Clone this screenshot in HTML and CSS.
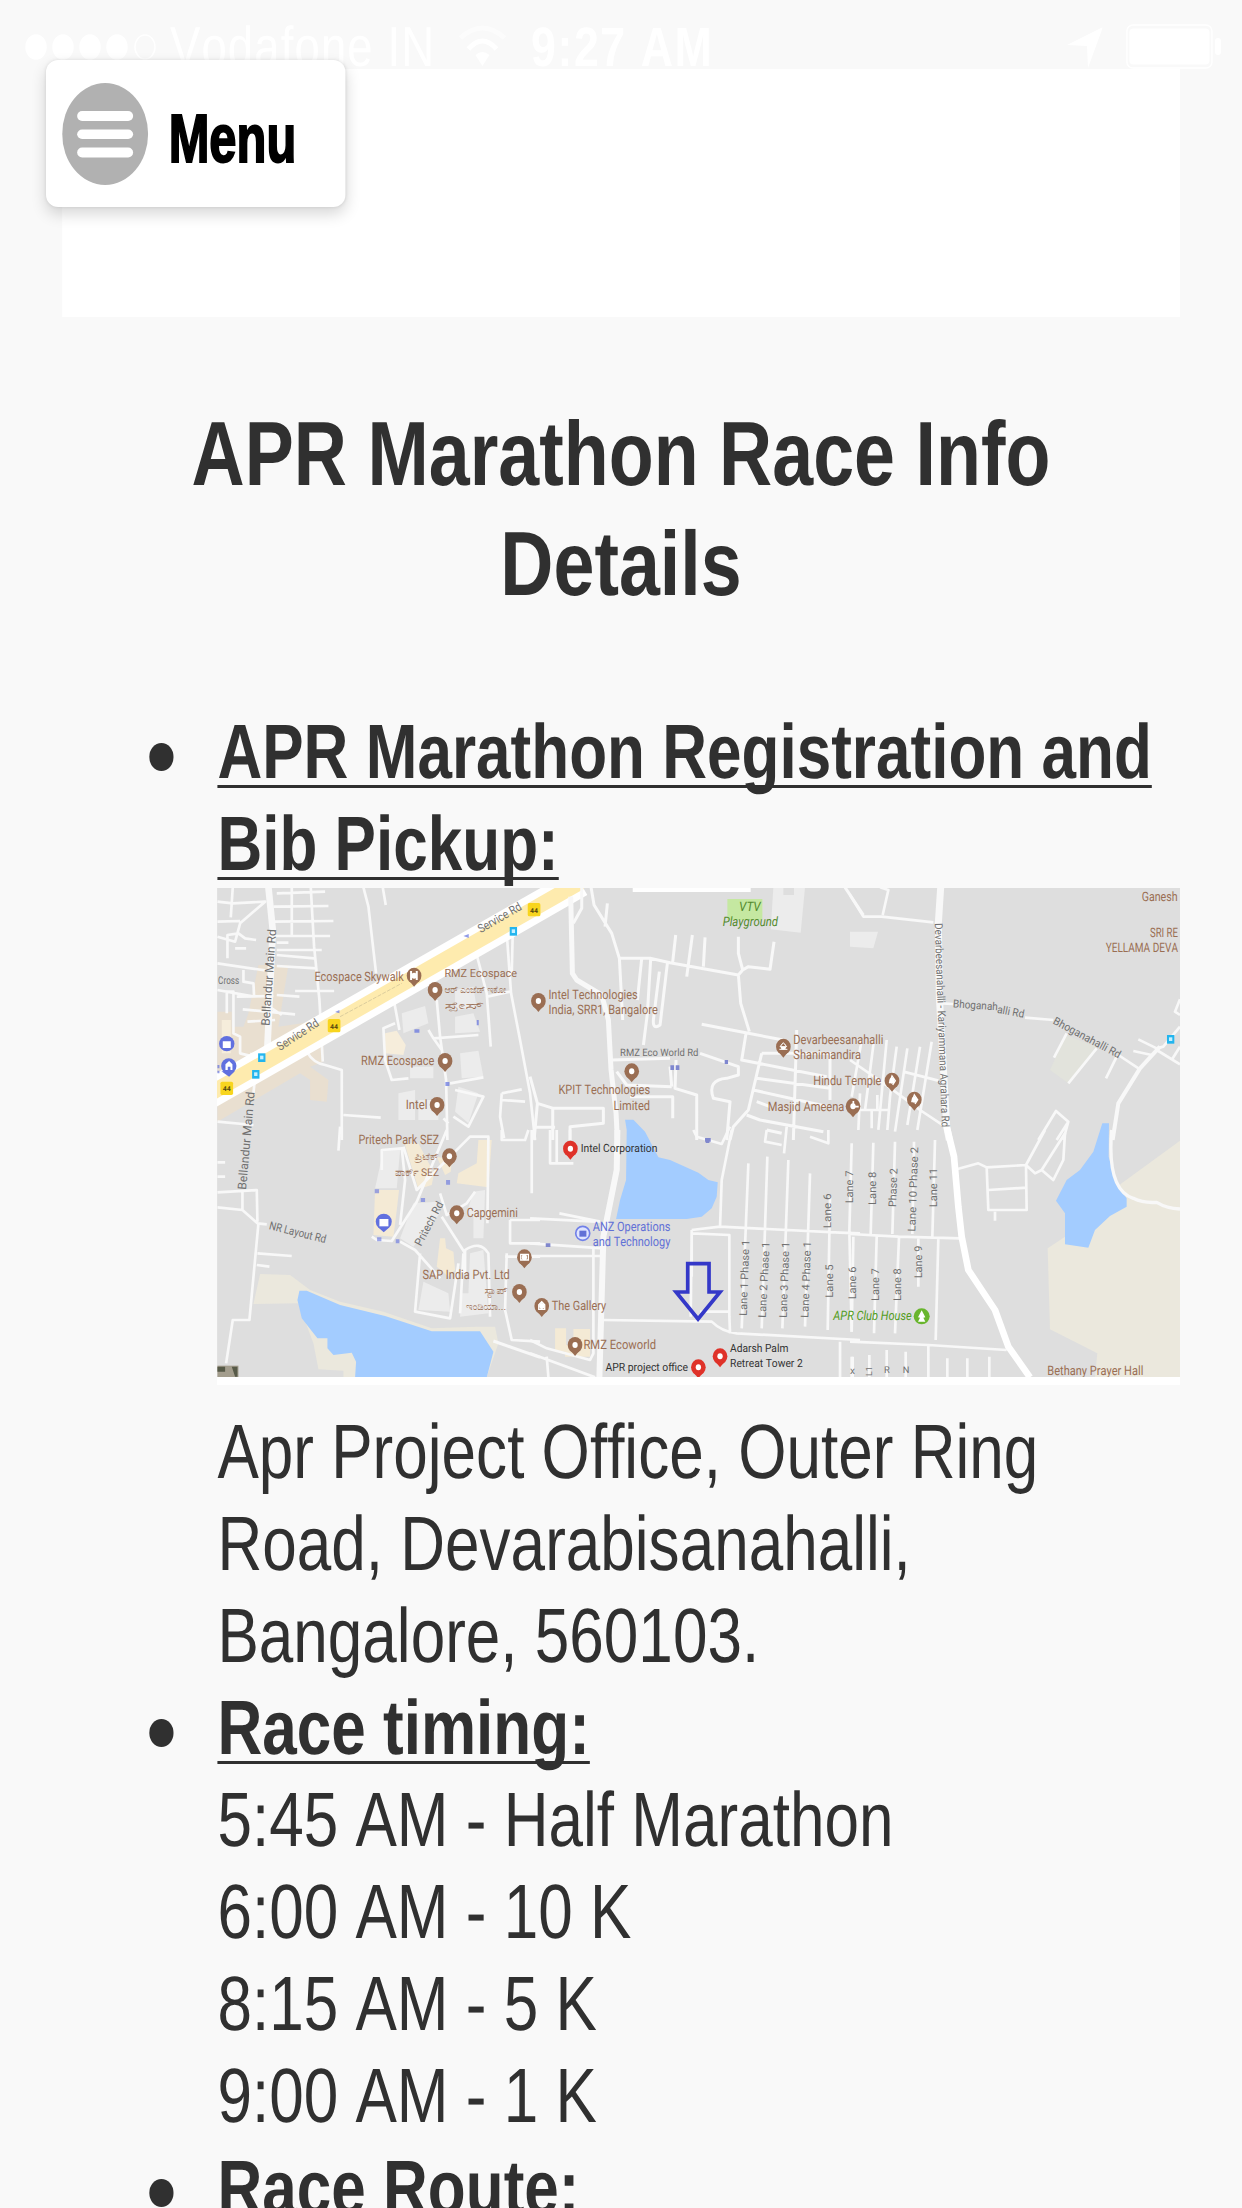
FILE: index.html
```html
<!DOCTYPE html>
<html lang="en">
<head>
<meta charset="utf-8">
<title>APR Marathon Race Info</title>
<link rel="stylesheet" href="styles.css">
<script src="map.js" defer></script>
</head>
<body>
<div class="screen">
  <header class="status">
    <svg class="signal" viewBox="0 0 132 26" preserveAspectRatio="none" fill="#fff" stroke="#fff" stroke-width="1.5"><ellipse cx="11" cy="13" rx="10" ry="12"/><ellipse cx="38" cy="13" rx="10" ry="12"/><ellipse cx="65" cy="13" rx="10" ry="12"/><ellipse cx="92" cy="13" rx="10" ry="12"/><ellipse cx="120" cy="13" rx="10" ry="12" fill="none"/></svg>
    <span class="carrier">Vodafone IN</span>
    <svg class="wifi" viewBox="0 0 48 41" preserveAspectRatio="none" fill="none" stroke="#fff" stroke-width="5"><path d="M2 13Q24 -7 46 13" opacity=".55"/><path d="M10 24Q24 8 38 24"/><path d="M24 41L17 30Q24 24 31 30Z" fill="#fff" stroke="none"/></svg>
    <span class="time">9:27 AM</span>
    <svg class="locate" viewBox="0 0 36 41" preserveAspectRatio="none"><path d="M36 0L21 41L20 19L0 18Z" fill="#fff"/></svg>
    <svg class="battery" viewBox="0 0 96 45" preserveAspectRatio="none" fill="#fff"><rect x="1" y="1" width="85" height="43" rx="6" fill="none" stroke="#fff" stroke-width="1.500"/><rect x="3.500" y="4.500" width="80" height="36" rx="4"/><rect x="89" y="14" width="6" height="17" rx="3"/></svg>
  </header>
  <button class="menu">
    <svg class="menu-icon" viewBox="0 0 86 102" preserveAspectRatio="none"><ellipse cx="43" cy="51" rx="43" ry="51" fill="#b1b1b1"/><g fill="#fff"><rect x="15" y="28" width="56" height="10" rx="5"/><rect x="15" y="46.500" width="56" height="9.500" rx="5"/><rect x="15" y="64.500" width="56" height="10" rx="5"/></g></svg>
    <span class="menu-label">Menu</span>
  </button>
  <main class="content">
    <div class="banner"></div>
    <h1>APR Marathon Race Info Details</h1>
    <ul class="info">
      <li>
        <strong>APR Marathon Registration and Bib Pickup:</strong>
        <svg class="map" viewBox="217 888 963 489" preserveAspectRatio="none">
          <defs>
            <g id="pin"><path d="M-14 16L0 33L14 16Z"/><ellipse rx="22" ry="24"/><ellipse rx="8" ry="9" fill="#fff"/></g>
            <g id="stop"><rect x="-11" y="-13" width="22" height="26" fill="#23b5ee"/><rect x="-5" y="-6" width="10" height="11" fill="#c7f0ff"/></g>
            <g id="badge"><rect x="-19" y="-21" width="38" height="40" rx="5" fill="#f8d51e"/><text x="-12" y="8" textLength="24" font-size="20" fill="#56480e" font-weight="bold">44</text></g>
          </defs>
          <rect x="217" y="888" width="963" height="489" fill="#dedede"/>
          <!-- land and water -->
          <g transform="translate(210 880) scale(.33333)">
            <path fill="#e9dfd0" d="M22 395H65V440H100L115 400L145 255H235L205 440L340 420V545L300 560L355 600L350 665L300 660V600L270 580L22 725Z"/>
            <path fill="#f6eddb" d="M35 420H62V520H35ZM525 460L560 452L587 495L580 525L525 520Z"/>
            <path fill="#ececec" d="M575 400L645 378L655 430L580 460ZM735 410L790 400L810 455L735 460ZM750 520L805 512L820 590L755 595ZM565 640L615 630V720H565ZM625 660H685V720H625ZM745 620L805 640L775 730L735 695ZM735 330L790 320L800 385L735 390ZM600 560H670V595H600Z"/>
          </g>
          <g transform="translate(530 880) scale(.33333)">
            <path fill="#ececec" d="M730 22H825L812 158L722 148ZM960 155H1044L1030 205L960 200Z"/><path fill="#dedede" d="M760 22H792V45H760Z"/>
            <path fill="#c5e8a1" d="M592 57H697V120H592Z"/>
            <path fill="#fff" d="M308 22H662V36H308Z"/>
          </g>
          <g transform="translate(850 880) scale(.33333)">
            <path fill="#e2e3dc" d="M648 465L738 500L655 610L600 570Z"/>
          </g>
          <g transform="translate(210 1130) scale(.33333)">
            <path fill="#ebe8dd" d="M150 432L240 435L300 480L390 515L520 545L665 595L800 590H855L865 640L830 742H400V722L325 718L310 640L265 520L130 522Z"/>
            <path fill="#a3ccff" d="M268 482H290L390 525L525 558L665 604H810L850 665L830 742H435L438 695L425 668L370 675L352 655V625H322L275 565L262 510Z"/>
            <path fill="#f4ead5" d="M583 40H625L672 130L665 165L625 177ZM495 180H567L560 240L550 320L490 315ZM805 30H845L835 172L740 160L745 130L800 100ZM680 80L725 90L722 125L705 135ZM690 325H705L708 355L730 365L735 420L715 440L680 410Z"/>
            <path fill="#ececec" d="M520 60H570L560 175H495ZM610 220L680 215L690 250L610 350L570 325ZM790 185L825 180L820 325H790V260L770 250ZM640 455L715 490L720 545L625 540ZM780 370L820 360L835 550L750 560L755 490L775 490Z"/>
            <path fill="#a39d8d" d="M22 707H85V742H22Z"/><path fill="#575a48" d="M22 710H45V725H22ZM65 710H82V740H75Z"/>
          </g>
          <g transform="translate(530 1130) scale(.33333)">
            <path fill="#a3ccff" d="M285 -31H310L345 5L385 82L420 90L505 128L535 150L563 157L560 200L545 235L515 260L470 267H258L270 210L288 150L290 0Z"/>
            <path fill="#f4ead5" d="M75 595H108V645H130V597H180V680H105V665H75Z"/>
          </g>
          <g transform="translate(850 1130) scale(.33333)">
            <path fill="#ebe8dd" d="M990 32L815 160L645 320L593 355L600 598L742 670L735 742H990Z"/>
            <path fill="#a3ccff" d="M757 -20H777L776 80L800 165L830 205V230L780 258L735 300L715 353L645 343V250L618 212L650 150L690 120L730 65Z"/>
          </g>
          <!-- roads -->
          <g fill="none" stroke="#f8f8f8" stroke-linejoin="round">
            <g transform="translate(210 880) scale(.33333)" stroke-width="8">
              <path stroke-width="20" d="M175 22L188 150L172 500L155 535"/>
              <path d="M245 22V170M302 22L312 200L328 360L338 545M190 80L355 78M190 125L370 123M200 40L345 35M190 168H360M200 188H235M200 225L312 235M200 258L320 265M200 210H335M22 250L190 275M255 333H372M200 345L268 350M98 388L255 403M175 378L215 405M112 425L195 420M22 65L68 70L165 65L90 130L75 185L22 170M22 125L90 123M68 22L62 112M52 235V165L85 160L105 175L138 180M75 205H108M100 270V305L130 310L132 350L22 330M80 350L190 348M50 400V335H70V460L90 470V520L130 530M120 522H160M135 590L130 640M22 725L130 735"/>
              <path d="M460 22L475 80L498 280M518 22L527 75M890 160L903 340L930 480L960 640L975 780M908 160L905 280M800 225L830 340L842 500M832 350L900 335M553 370L568 450M555 430L520 445L525 540L545 600L595 595M680 360L690 470L708 600L712 780M655 450L670 475L805 465M670 475L695 510M290 515Q310 550 345 555L395 570V780M400 705L512 713M720 610L820 592M735 630L820 650L775 740L730 710M875 640L935 628M875 640L870 710L882 775M875 660L945 665M700 715L715 730"/>
              <path stroke="#fff" stroke-width="88" d="M-30 658L1110 7"/><path stroke="#feebae" stroke-width="46" d="M-30 658L1110 7"/>
              <path stroke="#c9bc94" stroke-width="2" stroke-dasharray="12 4" d="M390 410L575 310"/>
            </g>
            <g transform="translate(530 880) scale(.33333)" stroke-width="9">
              <path stroke-width="15" d="M122 50L127 280L140 300L215 345L235 420L243 570L258 700L262 780"/>
              <path d="M155 22V85L130 130M183 22L192 75L245 160L268 235H360L420 248L625 285M232 70L225 140M268 235L278 420M335 235L322 360M362 235L352 400L340 495M412 250L390 435Q368 450 370 420L388 275M437 165L428 245M487 165L470 290M525 172L520 260M625 170V220L638 270L625 285L632 370L658 455M638 270L655 260L720 268L732 185M515 433L655 460L760 480M648 460L635 540L890 590M245 540L420 535M510 520L625 560V585L590 595Q530 600 550 655L600 665L590 780M420 560L425 620M438 540L435 625L500 645V780M260 575L290 615L425 620M300 650H428V715M0 590L22 670L70 685H220V730L120 740V780M22 670L12 780M68 685V780M12 742H75M695 520H900V660M695 520L655 690L610 740L600 780M680 595L900 625M670 630L895 680M650 705L690 720L880 755M800 450L790 780M680 665L720 680M945 22L1000 105M710 750L755 760"/>
            </g>
            <g transform="translate(850 880) scale(.33333)" stroke-width="8">
              <path stroke-width="21" d="M272 22L265 130L268 350L290 740L298 780"/>
              <path d="M0 45L40 110H95L250 127M90 22L115 30L98 105M275 370L310 372M525 413L610 420M650 460L612 533M740 505L655 610M800 530L768 595M805 525L870 568M865 478L920 505L940 500L990 440M850 513L905 525M920 510L990 553M990 358L975 395L990 405M965 540L990 500M565 780L618 693L655 725L640 780M655 725L620 780M35 480L5 650M72 480L45 690M110 480L85 750M140 500L120 650L112 750M172 505L135 755M210 500L172 735M245 485L202 750M0 540L115 620L210 690L285 740M160 575L265 602M30 640L25 750M82 645V690M30 690H115M65 690V745"/>
              <path stroke-width="12" d="M930 500L870 565L805 670L788 780"/>
            </g>
            <g transform="translate(210 1130) scale(.33333)" stroke-width="8">
              <path d="M390 -10L385 62M22 97H45M22 140H45M22 187L140 180L142 275M97 185V238M22 232L97 240L142 280L170 283M145 280L118 570H68L48 700M142 370L245 378M140 405L178 410M515 120V60L575 55L585 150L570 285M485 320L500 330L545 333L620 215L710 0M580 50L620 180L780 20H835L832 280M570 335L615 360L690 445M630 370L615 545L720 565L745 400M695 260L765 370M690 190L710 255L770 220L795 185M765 430V360Q810 330 835 370L840 560M760 370L750 550M875 0V30H945L955 0M965 0V190M900 270H990M900 270V340H990M885 380H990M890 370L885 540L905 630L990 635"/>
              <path stroke-width="9" d="M850 633L990 682"/>
            </g>
            <g transform="translate(530 1130) scale(.33333)" stroke-width="8">
              <path stroke-width="18" d="M262 0L260 120L220 320L208 742"/>
              <path d="M88 250L210 275M0 265L200 275M0 340L220 355M0 378H215M120 0V30M60 0V100H130M80 0V100M490 0L500 20L575 42L600 -10M605 0L575 150L570 290M485 300L570 290L930 308L990 310M485 310L598 315V560L600 610M485 300L482 560M595 545H510M220 570L545 575Q575 605 620 610L990 630M190 355V670L180 690L50 655L0 630M0 670L195 742M50 680L55 742M655 100L635 595M712 80L695 595M775 90L757 595M840 130L825 590M900 200L893 600M965 40L958 305L965 605M930 635V742M710 0L705 35L755 45M770 -10L762 70M840 20L895 40V0M965 680V742M485 310V440"/>
            </g>
            <g transform="translate(850 1130) scale(.33333)" stroke-width="8">
              <path d="M0 312L145 320L330 325M70 38L62 312M135 35L127 312M192 35L187 312M255 30L247 320M10 320L5 605M80 320L72 610M147 320L135 610M205 325V470M265 325L257 630M0 635L235 645L470 660M235 645V742M110 660V742M58 675V742M167 665V742M292 685V742M352 685V742M418 680V742M8 680V742M320 118L385 100L410 112L528 105L585 0M410 112L415 240H530L528 105L555 130L575 120L645 10L640 90L610 150L575 120M415 180L530 173M435 245V272"/>
              <path stroke="#fff" stroke-width="20" d="M290 -10L312 80L325 230L335 320L355 420L435 540L475 650L540 742"/>
              <path stroke-width="10" d="M785 0Q770 180 850 205Q880 220 920 217Q950 235 990 237"/>
            </g>
          </g>
          <!-- labels and markers -->
          <g class="place" transform="translate(210 880) scale(.33333)">
            <text x="313" y="303" textLength="268">Ecospace Skywalk</text><text x="703" y="290" textLength="218" font-size="34">RMZ Ecospace</text>
            <text x="703" y="338" textLength="185" font-size="30">ಆರ್ ಎಂಜೆಡ್ ಇಕೋ</text><text x="703" y="386" textLength="120" font-size="30">ಸ್ಪೇಸ್</text>
            <text x="453" y="555" textLength="220">RMZ Ecospace</text><text x="587" y="688" textLength="65">Intel</text>
            <text x="24" y="312" textLength="63" font-size="32" class="road">Cross</text>
            <g class="road" font-size="36"><text transform="translate(178 438) rotate(-86)" textLength="290">Bellandur Main Rd</text><text transform="translate(210 513) rotate(-33)" textLength="142">Service Rd</text><text transform="translate(812 160) rotate(-30)" textLength="145">Service Rd</text><text transform="translate(108 930) rotate(-85)" textLength="295">Bellandur Main Rd</text></g>
            <use href="#pin" x="612" y="287"/><path d="M603 273V300M620 273V300M603 287H620" stroke="#fff" stroke-width="6"/><use href="#pin" x="675" y="330"/><use href="#pin" x="705" y="543"/><use href="#pin" x="681" y="675"/>
            <use href="#badge" x="50" y="626"/><use href="#badge" x="372" y="438"/><use href="#badge" x="972" y="90"/>
            <use href="#stop" x="155" y="533"/><use href="#stop" x="137" y="583"/><use href="#stop" x="910" y="154"/>
            <g fill="#6170df"><circle cx="50" cy="491" r="23"/><path d="M34 574L57 590L74 574Z"/><circle cx="56" cy="558" r="23"/><path fill="#fff" d="M38 484H62V504H38ZM46 553L57 543L67 553V570H61V560H53V570H46Z"/><path d="M760 168L776 162V174ZM375 396L388 390V400ZM613 448H628V458H613ZM800 420H806V436H800ZM706 606H718V618H706ZM22 555H28V565H22ZM22 572H28V580H22Z" opacity=".7"/></g>
          </g>
          <g class="place" transform="translate(530 880) scale(.33333)">
            <text x="55" y="358" textLength="268">Intel Technologies</text><text x="55" y="402" textLength="328">India, SRR1, Bangalore</text><text x="85" y="643" textLength="275">KPIT Technologies</text><text x="250" y="690" textLength="110">Limited</text>
            <text x="790" y="493" textLength="270">Devarbeesanahalli</text><text x="790" y="538" textLength="203">Shanimandira</text><text x="850" y="615" textLength="204">Hindu Temple</text><text x="713" y="693" textLength="230">Masjid Ameena</text>
            <text class="road" x="270" y="527" textLength="235" font-size="31">RMZ Eco World Rd</text>
            <g fill="#538b2d" font-style="italic"><text x="627" y="94" textLength="65">VTV</text><text x="578" y="138" textLength="166">Playground</text></g>
            <use href="#pin" x="25" y="363"/><use href="#pin" x="305" y="574"/><use href="#pin" x="760" y="500"/><path d="M748 508H772M750 500L760 488L770 500Z" stroke="#fff" stroke-width="3"/><use href="#pin" x="969" y="679"/><path d="M970 663V680H986" fill="none" stroke="#fff" stroke-width="5"/>
            <path fill="#7f87cf" d="M421 556H432V570H421ZM437 556H448V570H437ZM584 540H594V552H584ZM525 774H542V785H525Z"/>
          </g>
          <g class="place" transform="translate(850 880) scale(.33333)">
            <text x="875" y="62" textLength="108">Ganesh</text><text x="900" y="172" textLength="84">SRI RE</text><text x="767" y="216" textLength="217">YELLAMA DEVA</text>
            <g class="road" font-size="33"><text transform="translate(254 130) rotate(88)" textLength="612">Devarbeesanahalli - Kariyammana Agrahara Rd</text><text transform="translate(308 382) rotate(4)" textLength="135">Bhoganah</text><text transform="translate(440 398) rotate(11)" textLength="82">alli Rd</text><text transform="translate(607 430) rotate(28)" textLength="225">Bhoganahalli Rd</text></g>
            <use href="#pin" x="126" y="602"/><use href="#pin" x="193" y="659"/><path d="M118 610L126 588L136 602L128 615M185 667L193 645L203 659L195 672" fill="none" stroke="#fff" stroke-width="4"/><use href="#stop" x="962" y="478"/>
          </g>
          <g class="place" transform="translate(210 1130) scale(.33333)">
            <text x="445" y="43" textLength="242">Pritech Park SEZ</text><text x="613" y="90" textLength="73" font-size="30">ಪ್ರಿಟೆಕ್</text><text x="555" y="139" textLength="132" font-size="32">ಪಾರ್ಕ್ SEZ</text><text x="770" y="262" textLength="153">Capgemini</text><text x="637" y="447" textLength="262">SAP India Pvt. Ltd</text><text x="823" y="492" textLength="70" font-size="30">ಸ್ಯಾಪ್</text><text x="768" y="541" textLength="120" font-size="30">ಇಂಡಿಯಾ...</text>
            <g class="road" font-size="34"><text transform="translate(175 297) rotate(14)" textLength="175">NR Layout Rd</text><text transform="translate(633 350) rotate(-62)" textLength="145">Pritech Rd</text></g>
            <use href="#pin" x="718" y="79"/><use href="#pin" x="740" y="250"/><use href="#pin" x="943" y="382"/><path fill="none" d="M932 373H955V390H932Z" stroke="#fff" stroke-width="4"/><use href="#pin" x="928" y="486"/>
            <g fill="#6170df"><path d="M504 292L521 307L538 292Z"/><circle cx="521" cy="275" r="24"/><path fill="#fff" d="M508 267H535V289H508Z"/><path opacity=".6" d="M494 178H507V190H494ZM632 204H645V216H632ZM708 150H720V164H708ZM501 322H514V334H501ZM557 328H568V340H557Z"/></g>
          </g>
          <g class="place" transform="translate(530 1130) scale(.33333)">
            <text x="65" y="540" textLength="163">The Gallery</text><text x="160" y="657" textLength="218">RMZ Ecoworld</text>
            <g fill="#6170d6"><text x="188" y="304" textLength="233">ANZ Operations</text><text x="188" y="348" textLength="233">and Technology</text><circle cx="158" cy="310" r="21" fill="#dfe4ff" stroke="#7180e8" stroke-width="5"/><path d="M148 302H169V320H148Z"/></g>
            <g fill="#333" font-size="34"><text x="152" y="66" textLength="230">Intel Corporation</text><text x="226" y="723" textLength="248">APR project office</text><text x="600" y="667" textLength="175">Adarsh Palm</text><text x="600" y="710" textLength="218">Retreat Tower 2</text></g>
            <g class="road" font-size="32"><text transform="translate(650 558) rotate(-88)" textLength="228">Lane 1 Phase 1</text><text transform="translate(707 564) rotate(-87)" textLength="228">Lane 2 Phase 1</text><text transform="translate(770 564) rotate(-88)" textLength="228">Lane 3 Phase 1</text><text transform="translate(835 564) rotate(-88)" textLength="230">Lane 4 Phase 1</text><text transform="translate(903 295) rotate(-90)" textLength="105">Lane 6</text><text transform="translate(908 503) rotate(-90)" textLength="100">Lane 5</text><text transform="translate(970 220) rotate(-90)" textLength="98">Lane 7</text><text transform="translate(978 508) rotate(-90)" textLength="98">Lane 6</text></g>
            <use href="#pin" x="35" y="528"/><path d="M26 538V524L35 515L44 524V538Z" fill="none" stroke="#fff" stroke-width="4"/><use href="#pin" x="135" y="645"/>
            <g fill="#df3229"><use href="#pin" x="121" y="56"/><use href="#pin" x="570" y="679"/><use href="#pin" x="505" y="712"/></g>
            <path d="M473 401H537V486H570L504 567L438 486H473Z" fill="none" stroke="#3438c8" stroke-width="11"/><path fill="#8087cc" d="M47 340H61V351H47ZM527 27H538V39H527Z"/>
          </g>
          <g class="place" transform="translate(850 1130) scale(.33333)">
            <text x="592" y="734" textLength="288">Bethany Prayer Hall</text><text x="-50" y="571" textLength="235" fill="#529c22" font-style="italic">APR Club House</text>
            <g fill="#68b52d"><circle cx="215" cy="559" r="24"/><path d="M215 541L226 562L220 563L226 575H204L210 563L204 562Z" fill="#fff"/></g>
            <g class="road" font-size="32"><text transform="translate(78 225) rotate(-90)" textLength="100">Lane 8</text><text transform="translate(138 232) rotate(-88)" textLength="117">Phase 2</text><text transform="translate(196 305) rotate(-88)" textLength="254">Lane 10 Phase 2</text><text transform="translate(260 232) rotate(-90)" textLength="118">Lane 11</text><text transform="translate(86 513) rotate(-90)" textLength="98">Lane 7</text><text transform="translate(152 513) rotate(-90)" textLength="98">Lane 8</text><text transform="translate(215 445) rotate(-90)" textLength="98">Lane 9</text><text x="0" y="732" font-size="30">x</text><text transform="translate(66 738) rotate(-90)" font-size="26">L1</text><text x="102" y="730" font-size="28">R</text><text x="158" y="730" font-size="28">N</text></g>
          </g>
        </svg>
        <p>Apr Project Office, Outer Ring Road, Devarabisanahalli, Bangalore, 560103.</p>
      </li>
      <li>
        <strong>Race timing:</strong>
        <p>5:45 AM - Half Marathon<br>6:00 AM - 10 K<br>8:15 AM - 5 K<br>9:00 AM - 1 K</p>
      </li>
      <li><strong>Race Route:</strong></li>
    </ul>
  </main>
</div>
</body>
</html>
```
FILE: styles.css
```css
* { box-sizing: border-box; }
html, body { margin: 0; width: 1242px; height: 2208px; overflow: hidden; background: #f9f9f9; }
body { font-family: "Liberation Sans", Arial, sans-serif; color: #303030; text-rendering: geometricPrecision; font-kerning: none; }
/* The whole screen is condensed horizontally; widths below are before the scale. */
.screen { position: relative; width: 1538.8px; height: 2208px; overflow: hidden; transform: scaleX(.8071); transform-origin: 0 0; }
.status { display: flex; align-items: flex-start; height: 69px; padding: 24px 25px 0 31px; color: #fff; font-size: 56.4px; line-height: 46px; white-space: nowrap; }
.status svg { flex: none; }
.signal { width: 163.5px; height: 26px; margin-top: 10px; }
.carrier { width: 341px; margin-left: 16px; letter-spacing: 1.4px; }
.wifi { width: 59.5px; height: 41px; margin: 1px 0 0 16px; }
.time { margin-left: 31px; font-weight: bold; width: 235px; font-size: 55.4px; letter-spacing: 1.9px; }
.locate { width: 44.6px; height: 41px; margin: 3px 0 0 auto; }
.battery { width: 119px; height: 45px; margin-left: 28.5px; }
.menu { position: absolute; left: 57px; top: 60px; z-index: 2; width: 371px; height: 147px; display: flex; align-items: center; gap: 25px; padding: 0 20px; border: 0; border-radius: 15px / 12px; background: #fff; box-shadow: 0 7px 16px rgba(0,0,0,.16), 0 0 4px rgba(0,0,0,.1); font: inherit; color: #000; }
.menu-icon { flex: none; width: 106.5px; height: 102px; }
.menu-label { font-size: 68px; font-weight: bold; line-height: 80px; transform: scaleX(.89); transform-origin: 0 50%; padding-top: 8px; -webkit-text-stroke: 2px #000; }
.content { padding: 0 77px; }
.banner { height: 248px; background: #fff; }
h1 { margin: 81.5px 0 0; padding: 0 60px; text-align: center; font-size: 91.2px; line-height: 110.4px; }
.info { list-style: none; margin: 87.1px 0 0; padding: 0 0 0 107.7px; font-size: 76.9px; line-height: 92px; }
.info li { position: relative; padding-left: 84.7px; }
.info li::before { content: ""; position: absolute; left: 0; top: 37px; width: 30px; height: 28px; border-radius: 50%; background: #303030; }
.info strong { display: block; text-decoration: underline; text-decoration-thickness: 3px; text-underline-offset: 7px; text-decoration-skip-ink: none; }
.info p { margin: 0; }
.map { display: block; width: 1193px; height: 497px; margin: -2.6px 0 20.8px; border-bottom: 8px solid #fff; font-family: Roboto, sans-serif; font-size: 39px; }
.place { fill: #9a6e53; }
.road { fill: #707070; }
```
FILE: map.js
```javascript
// Condense each map label's glyphs, not only its letter spacing, to its set length.
document.querySelectorAll('.map text[textLength]').forEach(function (label) {
  label.setAttribute('lengthAdjust', 'spacingAndGlyphs');
});
```
